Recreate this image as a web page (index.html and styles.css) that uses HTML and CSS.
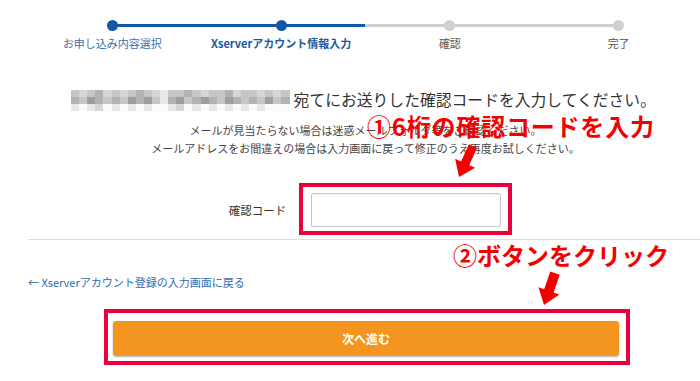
FILE: index.html
```html
<!DOCTYPE html>
<html lang="ja">
<head>
<meta charset="utf-8">
<title>確認コード入力</title>
<link rel="stylesheet" href="styles.css">
</head>
<body>
<div class="screen">
  <div class="page">
    <ol class="stepper">
      <li class="step done"><span class="dot"></span><span class="label">お申し込み内容選択</span></li>
      <li class="step current"><span class="dot"></span><span class="label">Xserverアカウント情報入力</span></li>
      <li class="step half"><span class="dot"></span><span class="label">確認</span></li>
      <li class="step"><span class="dot"></span><span class="label">完了</span></li>
    </ol>

    <div class="message">
      <p class="lead">
        <span class="mosaic" aria-hidden="true">
          <i class="c"></i><i class="b"></i><i class="c"></i><i class="d"></i><i class="b"></i><i class="c"></i><i class="b"></i><i class="c"></i><i class="d"></i><i class="c"></i><i class="b"></i><i class="a"></i><i class="c"></i><i class="c"></i><i class="d"></i><i class="c"></i><i class="b"></i><i class="c"></i><i class="c"></i><i class="d"></i><i class="b"></i><i class="c"></i><i class="c"></i><i class="b"></i><i class="c"></i><i class="b"></i><i class="c"></i>
          <i class="d"></i><i class="c"></i><i class="e"></i><i class="d"></i><i class="c"></i><i class="d"></i><i class="c"></i><i class="e"></i><i class="d"></i><i class="e"></i><i class="c"></i><i class="a"></i><i class="d"></i><i class="e"></i><i class="c"></i><i class="d"></i><i class="e"></i><i class="d"></i><i class="c"></i><i class="e"></i><i class="d"></i><i class="c"></i><i class="d"></i><i class="c"></i><i class="e"></i><i class="c"></i><i class="d"></i>
          <i class="a"></i><i class="w"></i><i class="a"></i><i class="b"></i><i class="w"></i><i class="a"></i><i class="w"></i><i class="a"></i><i class="w"></i><i class="a"></i><i class="w"></i><i class="w"></i><i class="a"></i><i class="b"></i><i class="w"></i><i class="a"></i><i class="w"></i><i class="a"></i><i class="w"></i><i class="a"></i><i class="w"></i><i class="a"></i><i class="w"></i><i class="a"></i><i class="w"></i><i class="w"></i><i class="w"></i>
        </span>
        <span class="lead-text">宛てにお送りした確認コードを入力してください。</span>
      </p>
      <p class="note">メールが見当たらない場合は迷惑メールフォルダ等をご確認ください。</p>
      <p class="note">メールアドレスをお間違えの場合は入力画面に戻って修正のうえ再度お試しください。</p>
    </div>

    <div class="form-row">
      <label class="form-label" for="code">確認コード</label>
      <div class="highlight highlight-input">
        <input id="code" class="code-input" type="text">
      </div>
    </div>

    <hr class="sep">

    <a class="back-link" href="#">← Xserverアカウント登録の入力画面に戻る</a>

    <div class="highlight highlight-button">
      <button class="next-btn" type="button">次へ進む</button>
    </div>
  </div>

  <div class="note-red note-1">①6桁の確認コードを入力</div>
  <svg class="arrow arrow-1" width="34" height="38" viewBox="0 0 34 38" aria-hidden="true">
    <polygon points="29.1,5.85 21.25,23.2 27.16,25.86 11,35 7.14,16.84 13.05,19.5 20.9,2.15" fill="#f40000"/>
  </svg>

  <div class="note-red note-2">②ボタンをクリック</div>
  <svg class="arrow arrow-2" width="36" height="40" viewBox="0 0 36 40" aria-hidden="true">
    <polygon points="29.74,6.63 23.62,24.43 29.3,26.38 14,37 8.46,19.23 14.15,21.18 20.27,3.38" fill="#f40000"/>
  </svg>
</div>
</body>
</html>
```

FILE: styles.css
```css
* { box-sizing: border-box; }

html, body {
  margin: 0;
  padding: 0;
  background: #fff;
}

body {
  font-family: "Noto Sans CJK JP", "Noto Sans", sans-serif;
  color: #333;
  overflow: hidden;
}

.screen {
  position: relative;
  width: 700px;
  height: 381px;
  overflow: hidden;
}

.page {
  margin-left: 28px;
  width: 675px;
}

/* Stepper */
.stepper {
  list-style: none;
  margin: 0;
  padding: 0;
  display: grid;
  grid-template-columns: repeat(4, 168.75px);
}

.step {
  position: relative;
  display: flex;
  flex-direction: column;
  align-items: center;
  padding-top: 20px;
}

.step:not(:first-child)::before {
  content: "";
  position: absolute;
  top: 24px;
  right: 50%;
  width: 100%;
  height: 3px;
  background: #d0d0d0;
}

.step.current::before { background: #1258a6; }
.step.half::before { background: linear-gradient(to right, #1258a6 50%, #d0d0d0 50%); }

.dot {
  position: relative;
  z-index: 1;
  width: 11px;
  height: 11px;
  border-radius: 50%;
  background: #d0d0d0;
}

.step.done .dot,
.step.current .dot { background: #1258a6; }

.label {
  margin-top: 4px;
  font-size: 11px;
  line-height: 16px;
  color: #555;
  white-space: nowrap;
}

.step.done .label { color: #3f6fae; }
.step.current .label { color: #1a57a1; font-weight: 700; }

/* Message */
.message {
  margin-top: 38px;
  text-align: center;
}

.message p { margin: 0; }

.lead {
  display: flex;
  justify-content: center;
  align-items: center;
  gap: 4px;
  padding-right: 4px;
  height: 22px;
}

.lead-text {
  font-size: 15.8px;
  line-height: 22px;
  color: #333;
  white-space: nowrap;
}

.mosaic {
  display: grid;
  grid-template-columns: repeat(27, 8.1px);
  grid-auto-rows: 7px;
}

.mosaic i { display: block; }
.mosaic .w { background: #fbfbfb; }
.mosaic .a { background: #e8e8e8; }
.mosaic .b { background: #d6d6d6; }
.mosaic .c { background: #c6c6c6; }
.mosaic .d { background: #b2b2b2; }
.mosaic .e { background: #9e9e9e; }

.lead + .note { margin-top: 10px; }

.note {
  font-size: 11px;
  line-height: 18px;
  color: #444;
  white-space: nowrap;
}

/* Form */
.form-row {
  margin-top: 26px;
  display: flex;
  align-items: center;
  justify-content: center;
  gap: 13px;
  padding-left: 10px;
}

.form-label {
  font-size: 11.5px;
  color: #333;
  margin-top: 1px;
}

.highlight {
  border: 4px solid #ea003c;
}

.highlight-input {
  padding: 6px 7px 4px 8px;
}

.code-input {
  display: block;
  width: 190px;
  height: 34px;
  border: 1px solid #c6c6c6;
  border-radius: 2px;
  background: #fff;
  box-shadow: inset 0 1px 2px rgba(0, 0, 0, 0.06);
  padding: 0 8px;
  font: inherit;
}

.sep {
  margin: 4px 0 0;
  border: 0;
  border-top: 1px solid #dedede;
}

.back-link {
  display: block;
  margin-top: 34px;
  font-size: 11px;
  line-height: 16px;
  color: #2d6db3;
  text-decoration: none;
  white-space: nowrap;
}

.highlight-button {
  margin-top: 19px;
  margin-left: 76px;
  width: 526px;
  padding: 8px 7px 5px 5px;
}

.next-btn {
  display: block;
  width: 100%;
  height: 35px;
  border: 0;
  border-radius: 3px;
  background: #f4951f;
  box-shadow: 0 1px 2px rgba(0, 0, 0, 0.3);
  color: #fff;
  font-family: inherit;
  font-size: 12px;
  font-weight: 700;
  cursor: pointer;
}

/* Annotations (overlay) */
.note-red {
  position: absolute;
  font-size: 24px;
  line-height: 24px;
  font-weight: 700;
  color: #f40000;
  white-space: nowrap;
}

.note-1 { left: 367px; top: 114px; letter-spacing: 0.8px; }
.note-2 { left: 453px; top: 243px; }

.arrow { position: absolute; display: block; }
.arrow-1 { left: 448px; top: 142px; }
.arrow-2 { left: 530px; top: 268px; }
```
